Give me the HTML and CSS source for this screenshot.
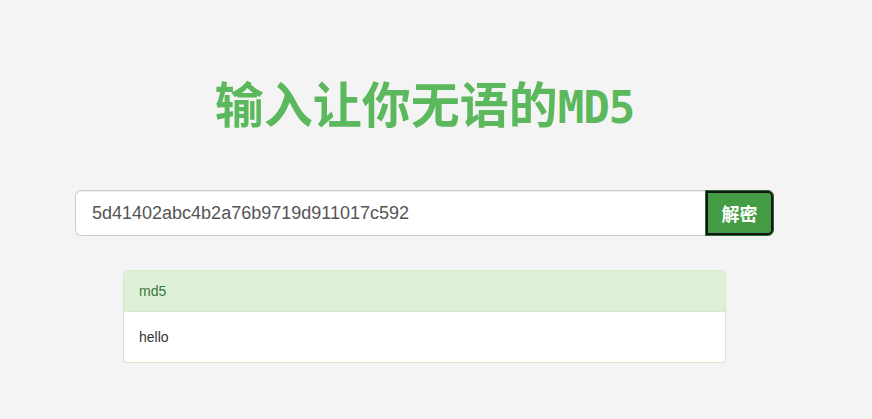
FILE: index.html
```
<!DOCTYPE html>
<html lang="zh-CN">
<head>
    <meta charset="UTF-8">
    <meta name="viewport" content="width=device-width, initial-scale=1.0">
    <title>输入让你无语的MD5</title>
    <link rel="stylesheet" href="styles.css">
</head>
<body>
    <div class="page">
        <h1 class="title">输入让你无语的<span class="title-latin">MD5</span></h1>

        <form class="search" onsubmit="return false">
            <input class="search-input" type="text" value="5d41402abc4b2a76b9719d911017c592">
            <button class="search-btn" type="submit">解密</button>
        </form>

        <div class="panel">
            <div class="panel-heading">md5</div>
            <div class="panel-body">hello</div>
        </div>
    </div>
</body>
</html>
```

FILE: styles.css
```
* {
    box-sizing: border-box;
}

body {
    margin: 0;
    background-color: #f4f4f4;
    color: #333;
    font-family: "Liberation Sans", Arial, "Noto Sans CJK SC", sans-serif;
    font-size: 14px;
    line-height: 20px;
}

.page {
    width: 849px;
    padding-top: 74px;
}

.title {
    margin: 0 0 54px;
    text-align: center;
    color: #5cb85c;
    font-family: "Noto Sans CJK SC", sans-serif;
    font-size: 49px;
    font-weight: 700;
    line-height: 56px;
}

.title-latin {
    font-family: "DejaVu Sans Mono", monospace;
    font-size: 44px;
    letter-spacing: -1px;
}

.search {
    display: flex;
    width: 699px;
    margin: 0 auto 34px;
}

.search-input {
    flex: 1;
    height: 46px;
    padding: 10px 16px;
    border: 1px solid #ccc;
    border-right: none;
    border-radius: 6px 0 0 6px;
    background-color: #fff;
    color: #555;
    font-family: "Liberation Sans", Arial, sans-serif;
    font-size: 18px;
    box-shadow: inset 0 1px 1px rgba(0, 0, 0, 0.075);
    outline: none;
}

.search-btn {
    width: 69px;
    height: 46px;
    padding: 0;
    border: 1px solid #2d6a2d;
    border-radius: 0 6px 6px 0;
    background-color: #449d44;
    color: #fff;
    font-family: "Noto Sans CJK SC", sans-serif;
    font-size: 18px;
    font-weight: 700;
    box-shadow: inset 0 0 0 2px #151515;
    cursor: pointer;
}

.panel {
    width: 603px;
    margin: 0 auto;
    border: 1px solid #d6e9c6;
    border-radius: 4px;
    background-color: #fff;
    box-shadow: 0 1px 1px rgba(0, 0, 0, 0.05);
}

.panel-heading {
    padding: 10px 15px;
    border-bottom: 1px solid #d6e9c6;
    border-radius: 3px 3px 0 0;
    background-color: #dff0d8;
    color: #3c763d;
}

.panel-body {
    padding: 15px;
}
```
